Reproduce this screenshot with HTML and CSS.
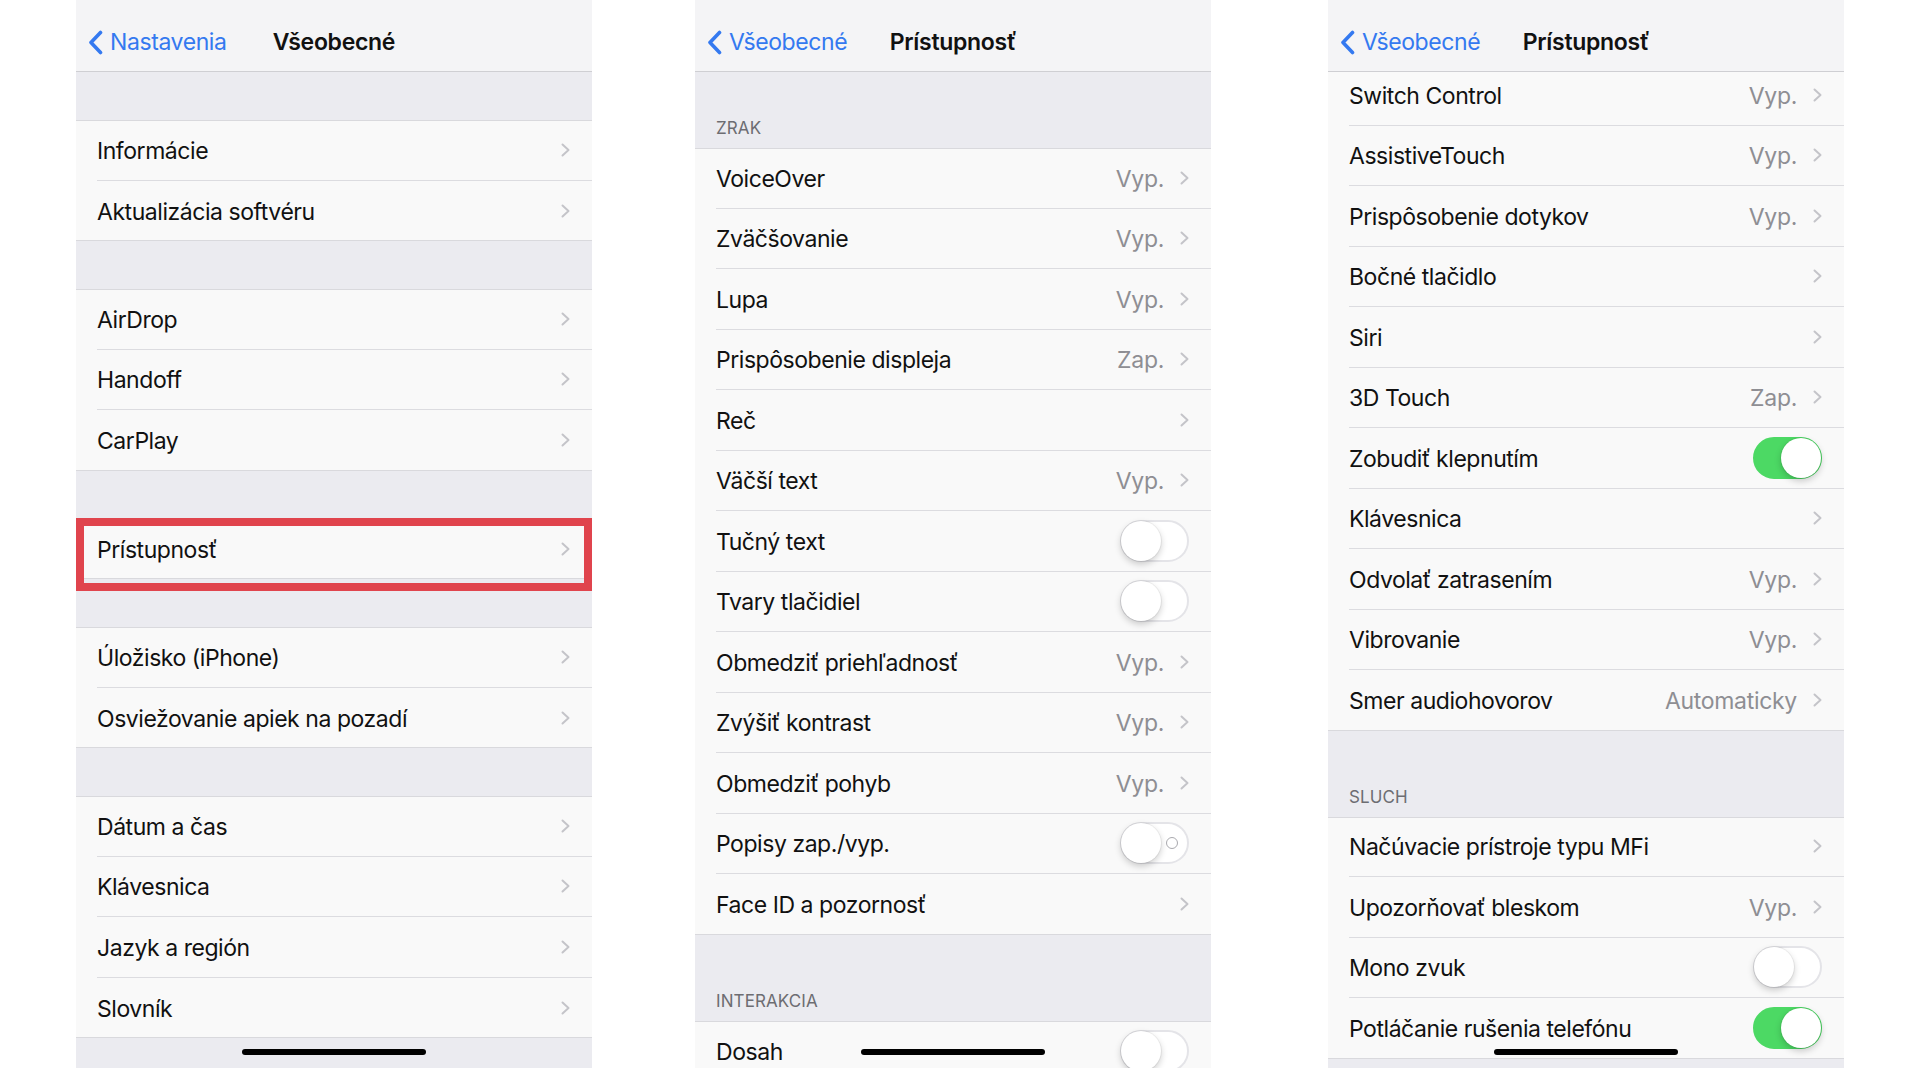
FILE: index.html
```html
<!DOCTYPE html>
<html lang="sk">
<head>
  <meta charset="UTF-8">
  <meta name="viewport" content="width=device-width, initial-scale=1.0">
  <title>Všeobecné – Prístupnosť</title>
  <link rel="stylesheet" href="styles.css">
</head>
<body>
  <div class="screens">

    <!-- obrazovka 1: Všeobecné -->
    <section class="phone">
      <header class="navbar">
        <span class="back"><svg class="back-icon" viewBox="0 0 15 25"><path d="M12.5 2.5 L3 12.5 L12.5 22.5"/></svg>Nastavenia</span>
        <span class="title">Všeobecné</span>
      </header>
      <div class="gap"></div>
      <div class="group">
        <div class="row"><div class="row-inner"><span class="label">Informácie</span><svg class="chevron" viewBox="0 0 9 14"><path d="M1.5 1.5 L7.5 7 L1.5 12.5"/></svg></div></div>
        <div class="row"><div class="row-inner"><span class="label">Aktualizácia softvéru</span><svg class="chevron" viewBox="0 0 9 14"><path d="M1.5 1.5 L7.5 7 L1.5 12.5"/></svg></div></div>
      </div>
      <div class="gap"></div>
      <div class="group">
        <div class="row"><div class="row-inner"><span class="label">AirDrop</span><svg class="chevron" viewBox="0 0 9 14"><path d="M1.5 1.5 L7.5 7 L1.5 12.5"/></svg></div></div>
        <div class="row"><div class="row-inner"><span class="label">Handoff</span><svg class="chevron" viewBox="0 0 9 14"><path d="M1.5 1.5 L7.5 7 L1.5 12.5"/></svg></div></div>
        <div class="row"><div class="row-inner"><span class="label">CarPlay</span><svg class="chevron" viewBox="0 0 9 14"><path d="M1.5 1.5 L7.5 7 L1.5 12.5"/></svg></div></div>
      </div>
      <div class="gap"></div>
      <div class="group">
        <div class="row row-marked"><div class="row-inner"><span class="label">Prístupnosť</span><svg class="chevron" viewBox="0 0 9 14"><path d="M1.5 1.5 L7.5 7 L1.5 12.5"/></svg></div><div class="highlight"></div></div>
      </div>
      <div class="gap"></div>
      <div class="group">
        <div class="row"><div class="row-inner"><span class="label">Úložisko (iPhone)</span><svg class="chevron" viewBox="0 0 9 14"><path d="M1.5 1.5 L7.5 7 L1.5 12.5"/></svg></div></div>
        <div class="row"><div class="row-inner"><span class="label">Osviežovanie apiek na pozadí</span><svg class="chevron" viewBox="0 0 9 14"><path d="M1.5 1.5 L7.5 7 L1.5 12.5"/></svg></div></div>
      </div>
      <div class="gap"></div>
      <div class="group">
        <div class="row"><div class="row-inner"><span class="label">Dátum a čas</span><svg class="chevron" viewBox="0 0 9 14"><path d="M1.5 1.5 L7.5 7 L1.5 12.5"/></svg></div></div>
        <div class="row"><div class="row-inner"><span class="label">Klávesnica</span><svg class="chevron" viewBox="0 0 9 14"><path d="M1.5 1.5 L7.5 7 L1.5 12.5"/></svg></div></div>
        <div class="row"><div class="row-inner"><span class="label">Jazyk a región</span><svg class="chevron" viewBox="0 0 9 14"><path d="M1.5 1.5 L7.5 7 L1.5 12.5"/></svg></div></div>
        <div class="row"><div class="row-inner"><span class="label">Slovník</span><svg class="chevron" viewBox="0 0 9 14"><path d="M1.5 1.5 L7.5 7 L1.5 12.5"/></svg></div></div>
      </div>
      <div class="home-bar"></div>
    </section>

    <!-- obrazovka 2: Prístupnosť, hore -->
    <section class="phone phone-mid">
      <header class="navbar">
        <span class="back"><svg class="back-icon" viewBox="0 0 15 25"><path d="M12.5 2.5 L3 12.5 L12.5 22.5"/></svg>Všeobecné</span>
        <span class="title">Prístupnosť</span>
      </header>
      <div class="section-head section-first">ZRAK</div>
      <div class="group">
        <div class="row"><div class="row-inner"><span class="label">VoiceOver</span><span class="value">Vyp.</span><svg class="chevron" viewBox="0 0 9 14"><path d="M1.5 1.5 L7.5 7 L1.5 12.5"/></svg></div></div>
        <div class="row"><div class="row-inner"><span class="label">Zväčšovanie</span><span class="value">Vyp.</span><svg class="chevron" viewBox="0 0 9 14"><path d="M1.5 1.5 L7.5 7 L1.5 12.5"/></svg></div></div>
        <div class="row"><div class="row-inner"><span class="label">Lupa</span><span class="value">Vyp.</span><svg class="chevron" viewBox="0 0 9 14"><path d="M1.5 1.5 L7.5 7 L1.5 12.5"/></svg></div></div>
        <div class="row"><div class="row-inner"><span class="label">Prispôsobenie displeja</span><span class="value">Zap.</span><svg class="chevron" viewBox="0 0 9 14"><path d="M1.5 1.5 L7.5 7 L1.5 12.5"/></svg></div></div>
        <div class="row"><div class="row-inner"><span class="label">Reč</span><svg class="chevron" viewBox="0 0 9 14"><path d="M1.5 1.5 L7.5 7 L1.5 12.5"/></svg></div></div>
        <div class="row"><div class="row-inner"><span class="label">Väčší text</span><span class="value">Vyp.</span><svg class="chevron" viewBox="0 0 9 14"><path d="M1.5 1.5 L7.5 7 L1.5 12.5"/></svg></div></div>
        <div class="row"><div class="row-inner"><span class="label">Tučný text</span><span class="switch"><span class="knob"></span></span></div></div>
        <div class="row"><div class="row-inner"><span class="label">Tvary tlačidiel</span><span class="switch"><span class="knob"></span></span></div></div>
        <div class="row"><div class="row-inner"><span class="label">Obmedziť priehľadnosť</span><span class="value">Vyp.</span><svg class="chevron" viewBox="0 0 9 14"><path d="M1.5 1.5 L7.5 7 L1.5 12.5"/></svg></div></div>
        <div class="row"><div class="row-inner"><span class="label">Zvýšiť kontrast</span><span class="value">Vyp.</span><svg class="chevron" viewBox="0 0 9 14"><path d="M1.5 1.5 L7.5 7 L1.5 12.5"/></svg></div></div>
        <div class="row"><div class="row-inner"><span class="label">Obmedziť pohyb</span><span class="value">Vyp.</span><svg class="chevron" viewBox="0 0 9 14"><path d="M1.5 1.5 L7.5 7 L1.5 12.5"/></svg></div></div>
        <div class="row"><div class="row-inner"><span class="label">Popisy zap./vyp.</span><span class="switch switch-labels"><span class="knob"></span><span class="ring"></span></span></div></div>
        <div class="row"><div class="row-inner"><span class="label">Face ID a pozornosť</span><svg class="chevron" viewBox="0 0 9 14"><path d="M1.5 1.5 L7.5 7 L1.5 12.5"/></svg></div></div>
      </div>
      <div class="section-head">INTERAKCIA</div>
      <div class="group">
        <div class="row"><div class="row-inner"><span class="label">Dosah</span><span class="switch"><span class="knob"></span></span></div></div>
      </div>
      <div class="home-bar"></div>
    </section>

    <!-- obrazovka 3: Prístupnosť, posunuté nižšie -->
    <section class="phone phone-last">
      <header class="navbar">
        <span class="back"><svg class="back-icon" viewBox="0 0 15 25"><path d="M12.5 2.5 L3 12.5 L12.5 22.5"/></svg>Všeobecné</span>
        <span class="title">Prístupnosť</span>
      </header>
      <div class="group group-scrolled">
        <div class="row"><div class="row-inner"><span class="label">Switch Control</span><span class="value">Vyp.</span><svg class="chevron" viewBox="0 0 9 14"><path d="M1.5 1.5 L7.5 7 L1.5 12.5"/></svg></div></div>
        <div class="row"><div class="row-inner"><span class="label">AssistiveTouch</span><span class="value">Vyp.</span><svg class="chevron" viewBox="0 0 9 14"><path d="M1.5 1.5 L7.5 7 L1.5 12.5"/></svg></div></div>
        <div class="row"><div class="row-inner"><span class="label">Prispôsobenie dotykov</span><span class="value">Vyp.</span><svg class="chevron" viewBox="0 0 9 14"><path d="M1.5 1.5 L7.5 7 L1.5 12.5"/></svg></div></div>
        <div class="row"><div class="row-inner"><span class="label">Bočné tlačidlo</span><svg class="chevron" viewBox="0 0 9 14"><path d="M1.5 1.5 L7.5 7 L1.5 12.5"/></svg></div></div>
        <div class="row"><div class="row-inner"><span class="label">Siri</span><svg class="chevron" viewBox="0 0 9 14"><path d="M1.5 1.5 L7.5 7 L1.5 12.5"/></svg></div></div>
        <div class="row"><div class="row-inner"><span class="label">3D Touch</span><span class="value">Zap.</span><svg class="chevron" viewBox="0 0 9 14"><path d="M1.5 1.5 L7.5 7 L1.5 12.5"/></svg></div></div>
        <div class="row"><div class="row-inner"><span class="label">Zobudiť klepnutím</span><span class="switch on"><span class="knob"></span></span></div></div>
        <div class="row"><div class="row-inner"><span class="label">Klávesnica</span><svg class="chevron" viewBox="0 0 9 14"><path d="M1.5 1.5 L7.5 7 L1.5 12.5"/></svg></div></div>
        <div class="row"><div class="row-inner"><span class="label">Odvolať zatrasením</span><span class="value">Vyp.</span><svg class="chevron" viewBox="0 0 9 14"><path d="M1.5 1.5 L7.5 7 L1.5 12.5"/></svg></div></div>
        <div class="row"><div class="row-inner"><span class="label">Vibrovanie</span><span class="value">Vyp.</span><svg class="chevron" viewBox="0 0 9 14"><path d="M1.5 1.5 L7.5 7 L1.5 12.5"/></svg></div></div>
        <div class="row"><div class="row-inner"><span class="label">Smer audiohovorov</span><span class="value">Automaticky</span><svg class="chevron" viewBox="0 0 9 14"><path d="M1.5 1.5 L7.5 7 L1.5 12.5"/></svg></div></div>
      </div>
      <div class="section-head">SLUCH</div>
      <div class="group">
        <div class="row"><div class="row-inner"><span class="label">Načúvacie prístroje typu MFi</span><svg class="chevron" viewBox="0 0 9 14"><path d="M1.5 1.5 L7.5 7 L1.5 12.5"/></svg></div></div>
        <div class="row"><div class="row-inner"><span class="label">Upozorňovať bleskom</span><span class="value">Vyp.</span><svg class="chevron" viewBox="0 0 9 14"><path d="M1.5 1.5 L7.5 7 L1.5 12.5"/></svg></div></div>
        <div class="row"><div class="row-inner"><span class="label">Mono zvuk</span><span class="switch"><span class="knob"></span></span></div></div>
        <div class="row"><div class="row-inner"><span class="label">Potláčanie rušenia telefónu</span><span class="switch on"><span class="knob"></span></span></div></div>
      </div>
      <div class="home-bar"></div>
    </section>

  </div>
</body>
</html>
```

FILE: styles.css
```css
body {
  margin: 0;
  background: #fff;
  font-family: 'Inter', 'Roboto', sans-serif;
  color: #111;
  overflow: hidden;
}

.screens {
  display: flex;
  align-items: flex-start;
  padding-left: 76px;
}

.phone {
  position: relative;
  width: 516px;
  height: 1068px;
  overflow: hidden;
  background: #ebebf0;
  display: flex;
  flex-direction: column;
  flex-shrink: 0;
}

.phone-mid { margin-left: 103px; }
.phone-last { margin-left: 117px; }

/* navigacna lista */
.navbar {
  position: relative;
  z-index: 2;
  box-sizing: border-box;
  height: 72px;
  padding-top: 13px;
  background: #f4f4f6;
  border-bottom: 1px solid #cfcfd3;
  display: grid;
  grid-template-columns: 1fr auto 1fr;
  align-items: center;
  flex-shrink: 0;
}

.back {
  display: flex;
  align-items: center;
  gap: 7px;
  padding-left: 12px;
  color: #3479f0;
  font-size: 23px;
  letter-spacing: -0.4px;
}

.back-icon {
  width: 15px;
  height: 25px;
  fill: none;
  stroke: #3479f0;
  stroke-width: 3.6;
  stroke-linecap: round;
  stroke-linejoin: round;
}

.title {
  font-size: 23px;
  font-weight: 600;
  letter-spacing: -0.3px;
}

.gap {
  height: 48px;
  flex-shrink: 0;
}

.section-head {
  box-sizing: border-box;
  height: 86px;
  flex-shrink: 0;
  display: flex;
  align-items: flex-end;
  padding: 0 21px 10px;
  font-size: 17px;
  color: #6d6d72;
  letter-spacing: 0.1px;
}

.section-first { height: 76px; }

/* zoznam */
.group {
  background: #f9f9f9;
  box-shadow: inset 0 1px 0 #d9d9dd, inset 0 -1px 0 #d9d9dd;
  flex-shrink: 0;
}

.group-scrolled { margin-top: -7px; }

.row {
  position: relative;
  padding-left: 21px;
}

.row-inner {
  box-sizing: border-box;
  height: 60.5px;
  display: flex;
  align-items: center;
  padding: 2px 22px 0 0;
  border-bottom: 1px solid #dcdce0;
}

.row:last-child .row-inner { border-bottom: none; }

.label {
  flex: 1;
  font-size: 23px;
  letter-spacing: -0.45px;
  white-space: nowrap;
}

.value {
  font-size: 23px;
  letter-spacing: -0.3px;
  color: #8e8e93;
  margin-right: 16px;
}

.chevron {
  width: 9px;
  height: 14px;
  margin-top: -2px;
  fill: none;
  stroke: #c4c4c9;
  stroke-width: 2;
  stroke-linecap: round;
  stroke-linejoin: round;
}

/* prepinac */
.switch {
  box-sizing: border-box;
  width: 69px;
  height: 42px;
  margin-top: -2px;
  border-radius: 21px;
  border: 2px solid #e4e4e8;
  background: #fff;
  display: flex;
  align-items: center;
}

.knob {
  width: 40px;
  height: 40px;
  margin-left: -1px;
  border-radius: 50%;
  background: #fff;
  box-shadow: 0 3px 7px rgba(0,0,0,0.2), 0 0 0 1px rgba(0,0,0,0.05);
}

.switch.on {
  background: #4cd964;
  border-color: #4cd964;
  justify-content: flex-end;
}

.switch.on .knob { margin-left: 0; margin-right: -1px; }

.ring {
  width: 10px;
  height: 10px;
  margin-left: auto;
  margin-right: 9px;
  border: 1.5px solid #a9a9ae;
  border-radius: 50%;
}

/* zvyraznenie */
.highlight {
  position: absolute;
  top: -1px;
  left: 0;
  right: 0;
  height: 73px;
  box-sizing: border-box;
  border: 8px solid #e0444d;
}

.home-bar {
  position: absolute;
  left: 50%;
  bottom: 13px;
  width: 184px;
  height: 6px;
  margin-left: -92px;
  border-radius: 3px;
  background: #000;
}
```
